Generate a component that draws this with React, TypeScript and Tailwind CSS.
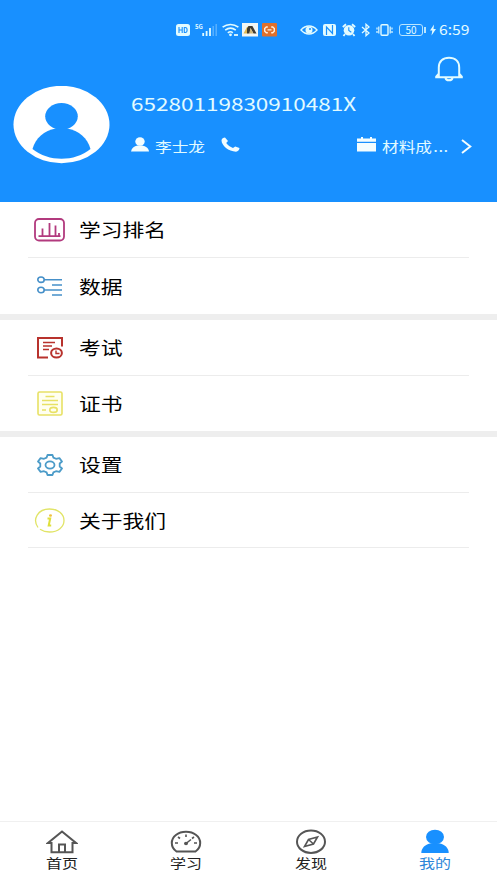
import type { ReactNode } from "react";

function StatusBar() {
  return (
    <div className="flex h-12 items-start pt-[23px] pl-[176px] text-[#e2fbff]">
      <svg className="h-[14px] w-[14px] shrink-0" viewBox="0 0 14 14">
        <rect x="0" y="1" width="14" height="12" rx="2.5" fill="currentColor" />
        <path d="M3 4v6M6.2 4v6M3 7h3.2M8.3 4.5v5h1c2.4 0 2.4-5 0-5z" fill="none" stroke="#1890ff" strokeWidth="1.1" />
      </svg>
      <span className="ml-[5px] w-[7px] text-[6px] leading-[7px] font-bold">5G</span>
      <svg className="h-[14px] w-[15px] shrink-0" viewBox="0 0 15 14">
        <path d="M1.2 10v3M4.6 8v5M8 5v8" stroke="currentColor" strokeWidth="1.8" />
        <path d="M11.2 3v10M14.2 1v12" stroke="#62b6ff" strokeWidth="1.3" />
      </svg>
      <svg className="ml-[5px] h-[14px] w-[17px] shrink-0" viewBox="0 0 17 14">
        <g fill="none" stroke="currentColor" strokeWidth="1.6">
          <path d="M.6 4.2c4.7-3.7 11-3.7 15.8 0" />
          <path d="M3.2 7.2c3.3-2.5 7.3-2.5 10.6 0" />
          <path d="M5.8 9.8c1.8-1.3 3.6-1.3 5 0" />
        </g>
        <circle cx="8.5" cy="11.8" r="1.4" fill="currentColor" />
        <path d="M12 12h4" stroke="currentColor" strokeWidth="1.8" />
      </svg>
      <svg className="ml-[3px] h-[14px] w-[16px] shrink-0" viewBox="0 0 16 14">
        <rect width="16" height="13.5" fill="#f2f6f4" />
        <path d="M1.5 10.5 5 4l2-.8L5.5 10.5z" fill="#e0b955" />
        <path d="M5 10.5V5.5L6.5 3h3.9L14.5 10.5h-3L8.5 5l-1 5.5z" fill="#403b32" />
        <path d="M7.5 10.5 8.4 5l3 5.5z" fill="#cfb677" />
      </svg>
      <svg className="ml-1 h-[14px] w-[15px] shrink-0" viewBox="0 0 15 14">
        <rect width="15" height="13.5" rx="1" fill="#df702c" />
        <path d="M5.8 4H4.3L2.7 5.5v2.7l1.6 1.5h1.5M9.2 4h1.5l1.6 1.5v2.7l-1.6 1.5H9.2M5.5 6.9h4" fill="none" stroke="#fff1df" strokeWidth="1.4" />
      </svg>
      <svg className="ml-[23px] h-[14px] w-[18px] shrink-0" viewBox="0 0 18 14">
        <path d="M1 7c4.7-5.3 11.3-5.3 16 0-4.7 5.3-11.3 5.3-16 0z" fill="none" stroke="currentColor" strokeWidth="1.4" />
        <circle cx="9" cy="7" r="3.5" fill="currentColor" />
        <circle cx="10" cy="6" r="1" fill="#1890ff" />
      </svg>
      <svg className="ml-[5px] h-[14px] w-[13px] shrink-0" viewBox="0 0 13 14">
        <rect y="1" width="13" height="12" rx="2" fill="currentColor" />
        <path d="M3.5 12V4l6 6.5V2" fill="none" stroke="#1890ff" strokeWidth="1.2" />
      </svg>
      <svg className="ml-[6px] h-[14px] w-[14px] shrink-0" viewBox="0 0 14 14">
        <circle cx="7" cy="7.2" r="5.3" fill="currentColor" />
        <path d="M.8 4 4 1.3M13.2 4 10 1.3M3 11l-1.5 2M11 11l1.5 2" stroke="currentColor" strokeWidth="1.8" />
        <path d="M6.8 4.2v3.3l2.5 1.7" fill="none" stroke="#1890ff" strokeWidth="1.1" />
      </svg>
      <svg className="ml-[5px] h-[14px] w-[10px] shrink-0" viewBox="0 0 10 14">
        <path d="M1 4l7 6-3 2.7V1.3L8 4l-7 6" fill="none" stroke="currentColor" strokeWidth="1.3" />
      </svg>
      <svg className="ml-[5px] h-[14px] w-[17px] shrink-0" viewBox="0 0 17 14">
        <rect x="5" y="1.7" width="7" height="10.6" rx="1" fill="none" stroke="currentColor" strokeWidth="1.4" />
        <path d="M2.8 3.5v7M14.2 3.5v7" stroke="currentColor" strokeWidth="1.2" />
        <path d="M1 4.5v2M1 8v2M16 4.5v2M16 8v2" stroke="currentColor" strokeWidth="1.2" />
      </svg>
      <div className="mt-[1px] ml-[6px] flex h-3 w-6 shrink-0 items-center justify-center rounded-[3px] border border-[#b9e5ff] text-[10px] leading-none">
        50
      </div>
      <div className="mt-[4px] ml-[1px] h-[6px] w-[2px] shrink-0 bg-[#b9e5ff]" />
      <svg className="ml-[4px] h-[14px] w-[6px] shrink-0" viewBox="0 0 6 14">
        <path d="M4 1.5 0 7.5h2.3L1.5 12.5 6 6H3.5z" fill="currentColor" />
      </svg>
      <span className="-mt-px ml-[3px] origin-left scale-x-[1.12] text-[14px] leading-[14px]">6:59</span>
    </div>
  );
}

function Header() {
  return (
    <header className="h-[202px] bg-[#1890ff] text-[#e2fbff]">
      <StatusBar />
      <div className="flex h-[38px] items-start justify-end pt-2 pr-[33px]">
        <svg className="h-[27px] w-[30px]" viewBox="0 0 30 27" fill="none" stroke="currentColor" strokeWidth="2">
          <path d="M1.2 21.3h27.6M4.8 21V11.5C4.8 5.3 9 1.8 15 1.8s10.2 3.5 10.2 9.7V21M2 21l3-3.5M28 21l-3-3.5" />
          <path d="M11.5 22c.4 3 6.6 3 7 0" />
        </svg>
      </div>
      <div className="flex">
        <svg className="ml-[13px] h-[78px] w-[97px] shrink-0" viewBox="0 0 97 78">
          <ellipse cx="48.5" cy="38.5" rx="48" ry="38.7" fill="#fff" />
          <ellipse cx="48.5" cy="30.3" rx="16.3" ry="13.3" fill="#1890ff" />
          <path d="M19.5 63C22.5 52 31 44.5 43 42.5h11c12 2 20.5 9.5 23.5 20.500-16 13-42 13-58 0z" fill="#1890ff" />
        </svg>
        <div className="ml-[21px] w-[366px]">
          <div className="mt-[5px] w-[182px] origin-left scale-x-[1.25] text-[18px] leading-6 whitespace-nowrap">
            65280119830910481X
          </div>
          <div className="mt-[19px] flex h-6 items-center">
            <svg className="mb-[3px] h-[15px] w-[18px]" viewBox="0 0 18 15" fill="#f3fdff">
              <ellipse cx="9" cy="4.5" rx="4.7" ry="4.3" />
              <path d="M0 14.5C.5 11 3 9.5 6.5 8.5h5c3.5 1 6 2.5 6.5 6z" />
            </svg>
            <span className="ml-[6px] w-[66px] origin-left scale-x-[1.19] text-[14px] whitespace-nowrap">
              <span className="block w-[44px]">李士龙</span>
            </span>
            <svg className="mb-[3px] h-[15px] w-[19px]" viewBox="0 0 19 15" fill="#f3fdff">
              <path d="M.5 3.5C.5 1.7 2.5.6 4 .5l3 3.5-1.8 2c1.5 2.2 4 4 6.800 5l2.200-1.600L18.5 11c-.2 2-1.500 3.500-3.500 3.700C7.500 14.500.7 8.500.5 3.500z" />
            </svg>
            <svg className="mb-[3px] ml-[117px] h-[15px] w-[19px]" viewBox="0 0 19 15" fill="#f3fdff">
              <path d="M0 1.5h4V0h2v1.5h7V0h2v1.5h4v3.200H0zM0 6h19v8.500H0z" />
            </svg>
            <span className="ml-[6px] w-[79px] whitespace-nowrap">
              <span className="flex w-[56px] origin-left scale-x-[1.19] text-[14px]">
                材料成<span className="ml-[1px] tracking-[0.5px]">...</span>
              </span>
            </span>
            <svg className="h-[15px] w-[11px]" viewBox="0 0 11 15" fill="none" stroke="#f3fdff" strokeWidth="2">
              <path d="M1 1 9.3 7.5 1 14" />
            </svg>
          </div>
        </div>
      </div>
    </header>
  );
}

function MenuRow({ icon, label, className = "h-[56px] border-b" }: { icon: ReactNode; label: string; className?: string }) {
  return (
    <div className={`mx-7 flex items-center border-[#ececec] ${className}`}>
      <span className="ml-[5px] flex w-[33px] justify-center">{icon}</span>
      <span className="ml-[12.5px] origin-left scale-x-[1.21] text-[18px] whitespace-nowrap text-black">{label}</span>
    </div>
  );
}

const rankIcon = (
  <svg className="h-6 w-[31px]" viewBox="0 0 31 24" fill="none" stroke="#b23a7e" strokeWidth="1.8">
    <rect x="1" y="1" width="29" height="21.5" rx="4" />
    <path d="M4.5 18.2h22M8.5 18V10.5M15.5 18V5M21.5 18V7.5M25 18v-3" />
  </svg>
);

const dataIcon = (
  <svg className="h-[21px] w-[25px]" viewBox="0 0 25 21" fill="none" stroke="#4690c9" strokeWidth="1.6">
    <ellipse cx="4" cy="3.7" rx="3.2" ry="2.7" />
    <ellipse cx="4" cy="14" rx="3.2" ry="2.7" />
    <path d="M7 3.7h18M15 9h10M7 14h18M15 19h10" />
  </svg>
);

const examIcon = (
  <svg className="h-[22px] w-[26px]" viewBox="0 0 26 22" fill="none" stroke="#b8322d" strokeWidth="2">
    <path d="M11 20.5H1V1h24v8.5" />
    <path d="M6 5.5h12M6 9h9M6 12.5h6" strokeWidth="1.7" />
    <ellipse cx="19.5" cy="16" rx="5.4" ry="4.6" />
    <path d="M19 13.5v3h3.5" strokeWidth="1.4" />
  </svg>
);

const certIcon = (
  <svg className="h-[25px] w-[26px]" viewBox="0 0 26 25" fill="none" stroke="#e8e165" strokeWidth="1.6">
    <rect x="1" y="1" width="24" height="23" rx="1.5" fill="#fffff0" />
    <path d="M8.5 5.5h9M5 9.5h16M5 13.5h16M5 19h4" />
    <ellipse cx="16.5" cy="18.9" rx="3.7" ry="2.5" />
  </svg>
);

const settingIcon = (
  <svg className="h-[22px] w-[26px]" viewBox="0 0 26 22" fill="none" stroke="#4b9bc8" strokeWidth="1.8" strokeLinejoin="round">
    <path d="M10.5 1h5l.9 2.6 2.6 1.2 3.4-.7 2.6 3.4-2.3 2v3l2.3 2-2.6 3.4-3.4-.7-2.6 1.2-.9 2.6h-5l-.9-2.6L7 17.2l-3.4.7L1 14.5l2.3-2v-3L1 7.5l2.6-3.4 3.4.7 2.6-1.2z" />
    <ellipse cx="13" cy="11" rx="4.5" ry="3.6" />
  </svg>
);

const aboutIcon = (
  <svg className="h-[25px] w-[31px]" viewBox="0 0 31 25" fill="none" stroke="#e1e466">
    <path d="M4 19.5C-2 11 4 1 15.5 1 24 1 30 6 30 12.5S24 24 15.5 24c-3.5 0-7-1-9.5-2.7" strokeWidth="1.3" />
    <path d="M13.5 10.5h2.7l-1.5 7h2.5" strokeWidth="2" stroke="#dfe03c" />
    <ellipse cx="16.5" cy="7.5" rx="1.5" ry="1.2" fill="#f0c040" stroke="none" />
  </svg>
);

function NavItem({ icon, label, active = false }: { icon: ReactNode; label: string; active?: boolean }) {
  return (
    <div className={`flex flex-1 flex-col items-center pt-[7px] ${active ? "text-[#1890ff]" : "text-[#555]"}`}>
      {icon}
      <span className={`scale-x-[1.23] text-[13px] leading-[18px] ${active ? "text-[#2c86d8]" : "text-[#222]"}`}>{label}</span>
    </div>
  );
}

function BottomNav() {
  return (
    <nav className="flex h-[62px] border-t border-[#f0f0f0] bg-white">
      <NavItem
        label="首页"
        icon={
          <svg className="h-[25px] w-[32px]" viewBox="0 0 32 25" fill="none" stroke="currentColor" strokeWidth="2">
            <path d="M5.5 14H2L16 2.5 30 14h-3.5v9.2h-21z" />
            <path d="M13 23v-7.5h6V23" />
          </svg>
        }
      />
      <NavItem
        label="学习"
        icon={
          <svg className="h-[25px] w-[32px]" viewBox="0 0 32 25" fill="none" stroke="currentColor" strokeWidth="2">
            <path d="M6.5 22.5C3.5 20.5 1.8 17.5 1.8 14 1.8 7.5 8 2.8 16 2.8S30.2 7.5 30.2 14c0 3.5-1.7 6.5-4.7 8.5z" />
            <path d="M16 14.5l5-4M16 5.5v2.5M8 8l2 1.5M5 14h3M24 14h3M22 9.5 24 8" strokeWidth="1.6" />
            <ellipse cx="16" cy="14.5" rx="2" ry="1.7" fill="currentColor" stroke="none" />
          </svg>
        }
      />
      <NavItem
        label="发现"
        icon={
          <svg className="h-[25px] w-[32px]" viewBox="0 0 32 25" fill="none" stroke="currentColor" strokeWidth="2">
            <ellipse cx="16" cy="12.7" rx="14" ry="11.2" />
            <path d="M22.5 8 18.5 15 9.5 17.5 13.5 10.5zM13.5 10.5l5 4.5" strokeWidth="1.6" />
          </svg>
        }
      />
      <NavItem
        active
        label="我的"
        icon={
          <svg className="h-[25px] w-[32px]" viewBox="0 0 32 25" fill="currentColor">
            <ellipse cx="16" cy="8" rx="9" ry="7.3" />
            <path d="M2.3 24c0-5.5 4-8.5 9.7-9.8h8c5.7 1.3 9.7 4.3 9.7 9.8z" />
          </svg>
        }
      />
    </nav>
  );
}

export default function App() {
  return (
    <div className="flex h-[883px] w-[497px] flex-col overflow-hidden bg-white font-['Noto_Sans_CJK_SC',sans-serif]">
      <Header />
      <main className="flex-1">
        <MenuRow icon={rankIcon} label="学习排名" />
        <MenuRow icon={dataIcon} label="数据" className="h-[56px]" />
        <div className="h-[6px] bg-[#eeeeee]" />
        <MenuRow icon={examIcon} label="考试" />
        <MenuRow icon={certIcon} label="证书" className="h-[55px]" />
        <div className="h-[6px] bg-[#eeeeee]" />
        <MenuRow icon={settingIcon} label="设置" />
        <MenuRow icon={aboutIcon} label="关于我们" className="h-[55px] border-b" />
      </main>
      <BottomNav />
    </div>
  );
}
